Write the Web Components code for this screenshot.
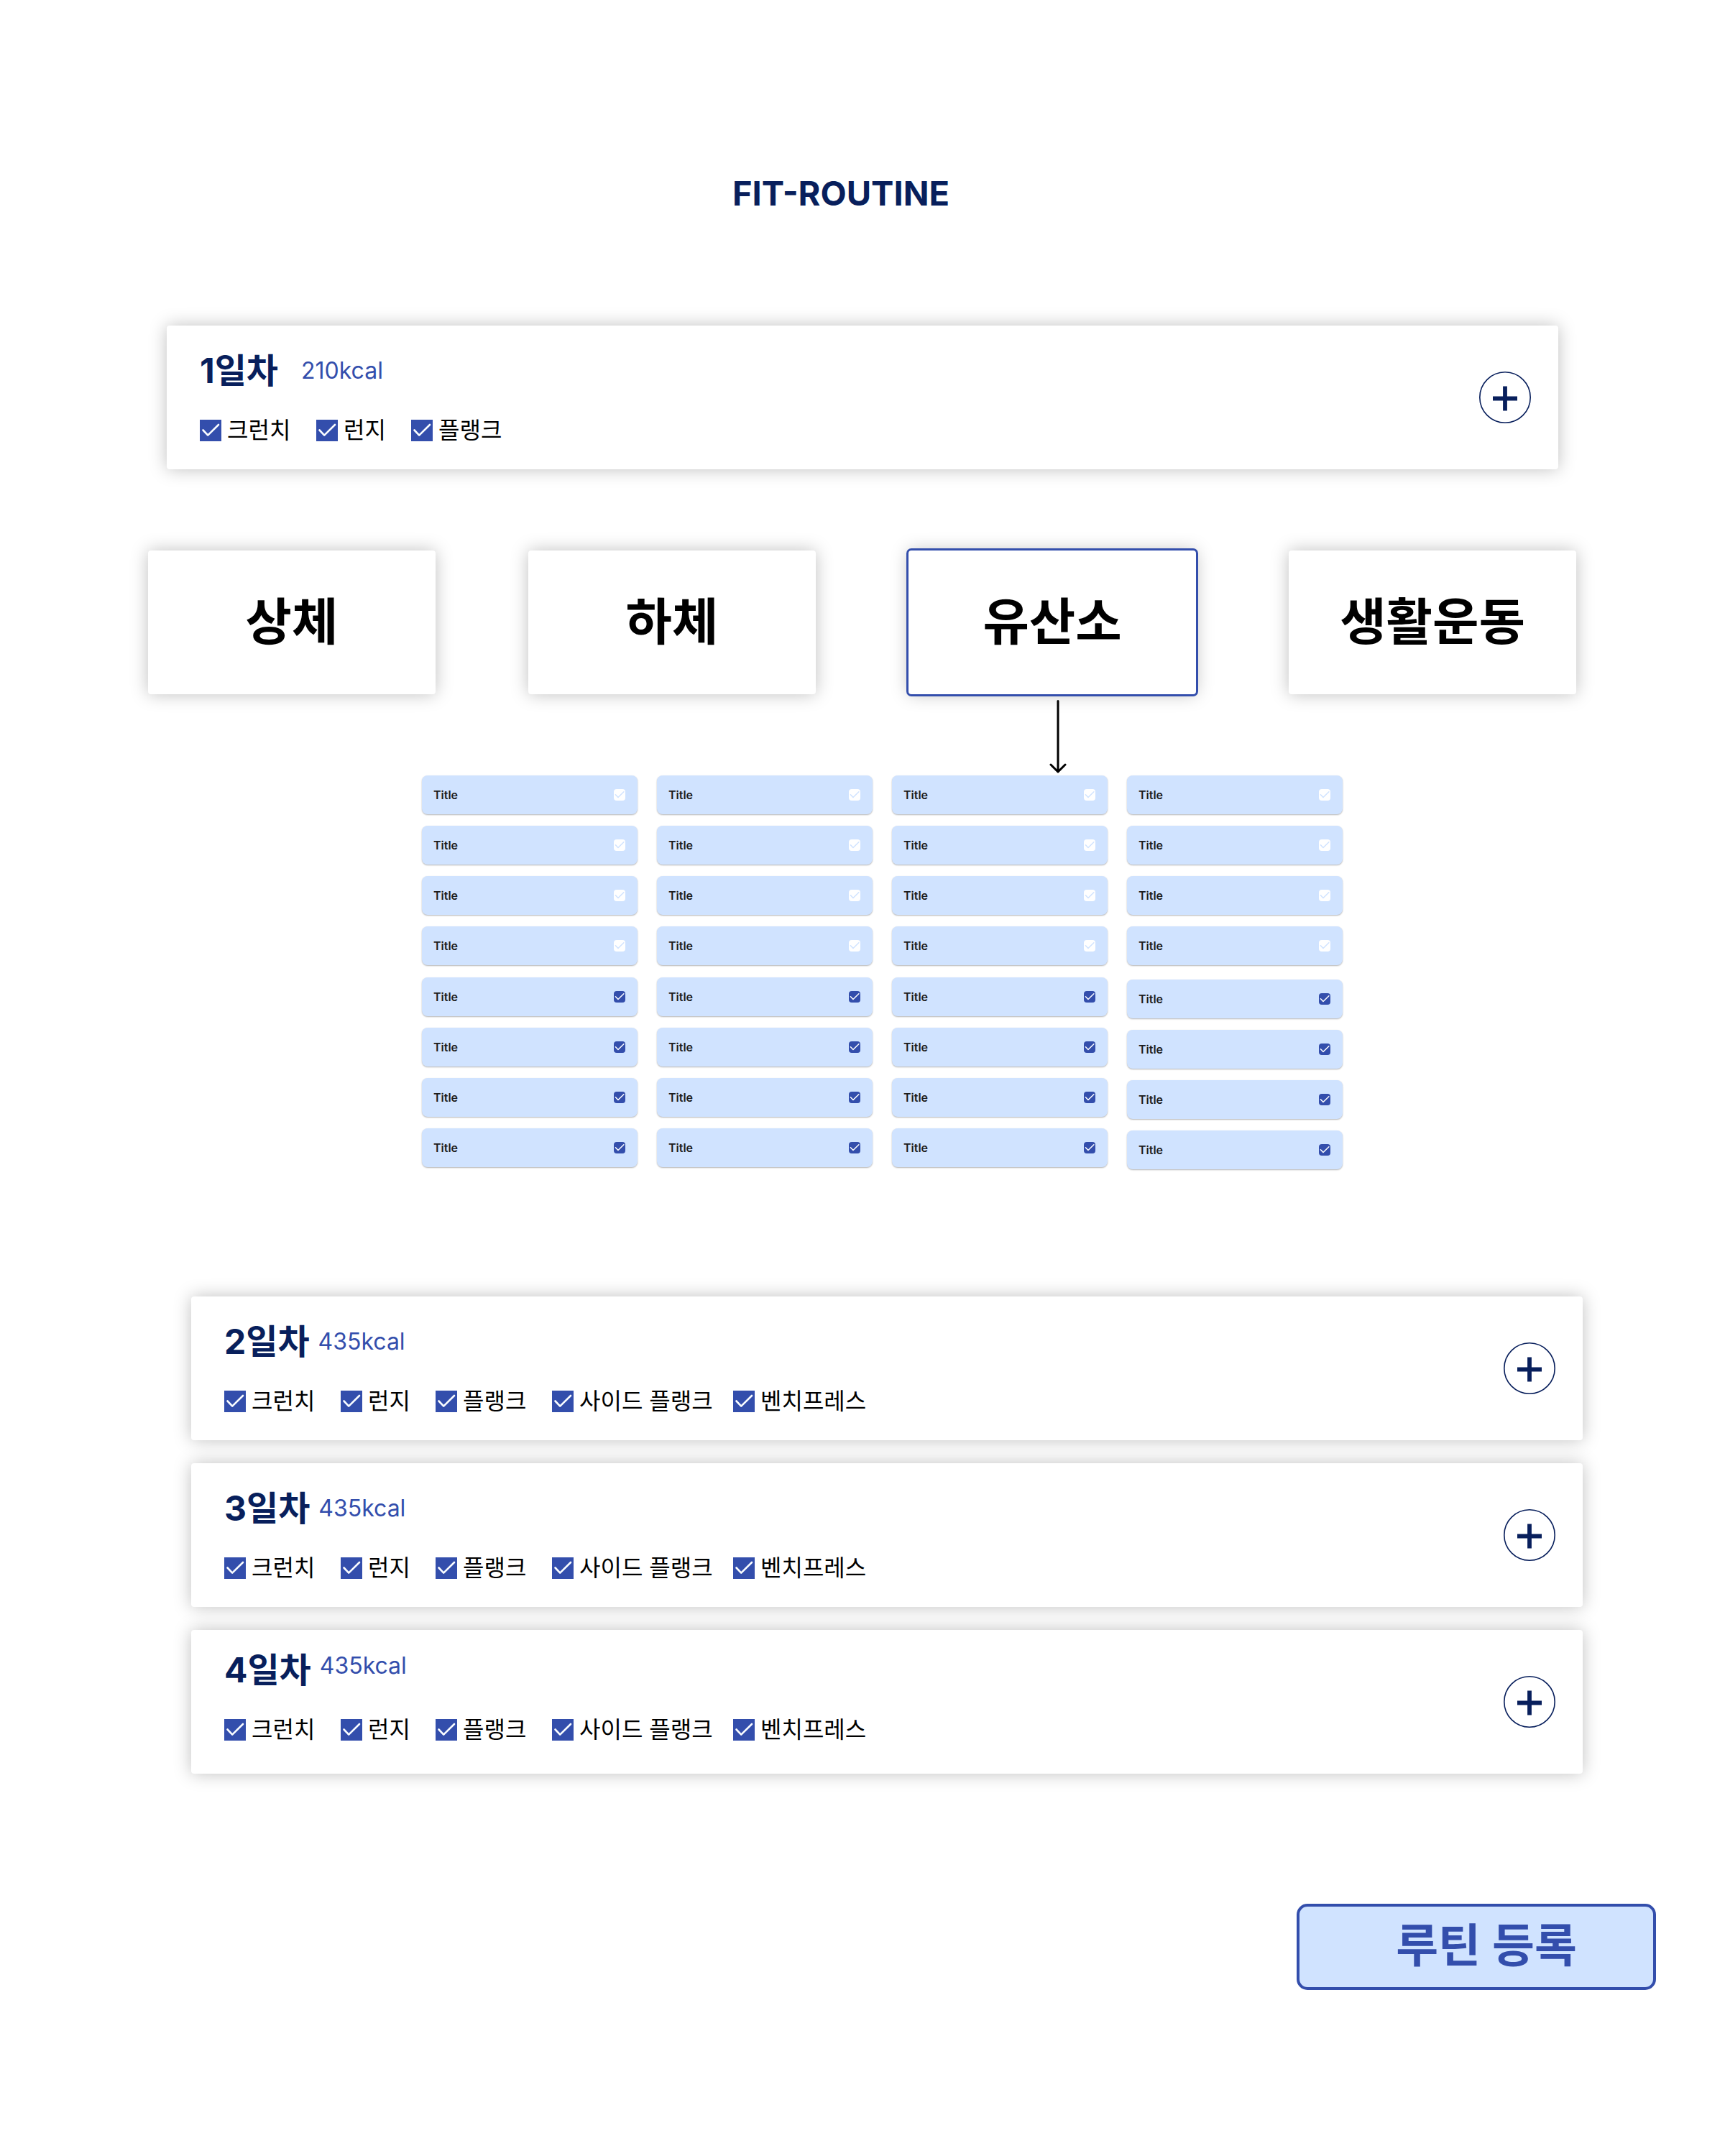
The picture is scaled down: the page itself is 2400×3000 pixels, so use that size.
<!DOCTYPE html>
<html lang="ko">
<head>
<meta charset="utf-8">
<title>FIT-ROUTINE</title>
<style>
  :root {
    --navy: #081f5c;
    --blue: #334eac;
    --sky: #d0e3ff;
    --card-shadow: 0 0 24px rgba(0, 0, 0, .25);
  }
  body {
    margin: 0;
    background: #fff;
    color: #000;
    font-family: Inter, "Noto Sans CJK KR", sans-serif;
  }
</style>
</head>
<body>
<fit-page></fit-page>

<script>
const define = (name, html, setup) => {
  const template = document.createElement('template');
  template.innerHTML = html;
  customElements.define(name, class extends HTMLElement {
    constructor() {
      super();
      this.attachShadow({ mode: 'open' }).append(template.content.cloneNode(true));
    }
    connectedCallback() {
      if (setup) setup(this, this.shadowRoot);
    }
  });
};

/* Tick box with its label; the "tile" variant is the light blue row. */
define('check-item', `
  <style>
    :host { display: block; }
    label { display: flex; align-items: center; gap: 8px; font-size: 32px; line-height: 46px; white-space: nowrap; cursor: pointer; }
    .box { display: grid; width: 30px; height: 30px; flex: none; }
    .box > * { grid-area: 1 / 1; width: 100%; height: 100%; }
    input { appearance: none; margin: 0; background: var(--blue); cursor: pointer; }
    svg { display: block; pointer-events: none; fill: none; stroke: #f9fcff; stroke-width: 2.6; stroke-linecap: round; stroke-linejoin: round; }
    :host([tile]) label {
      flex-direction: row-reverse; justify-content: space-between;
      height: 54px; box-sizing: border-box; padding: 0 17px 0 16px;
      border-radius: 8px; background: var(--sky); box-shadow: 0 1px 2px rgba(0, 0, 0, .3);
      color: #1c1c1c; font-size: 16px; line-height: 24px; font-weight: 600;
    }
    :host([tile]) .box { width: 16px; height: 16px; }
    :host([tile]) input { border-radius: 4px; background: #fff; }
    :host([tile]) svg { stroke: var(--sky); stroke-width: 2.8; }
    :host([tile]) input:checked { background: var(--blue); }
    :host([tile]) input:checked + svg { stroke: #fff; }
  </style>
  <label>
    <span class="box">
      <input type="checkbox">
      <svg viewBox="0 0 30 30" aria-hidden="true"><path d="M4.5 14.5 11.2 21.6 26 7"/></svg>
    </span>
    <span><slot></slot></span>
  </label>
`, (host, root) => {
  root.querySelector('input').checked = host.hasAttribute('checked');
});

/* Card of one day: heading, calories, exercises and an add button. */
define('day-card', `
  <style>
    :host { display: block; }
    article {
      display: flex; align-items: center; justify-content: space-between;
      min-height: 200px; box-sizing: border-box; padding: 0 38px 0 46px;
      border-radius: 4px; background: #fff; box-shadow: var(--card-shadow);
    }
    .body { display: grid; gap: 31px; padding: 34px 0 31px; }
    header { display: flex; align-items: center; gap: var(--kcal-gap, 12px); }
    h2 { margin: 0; font-size: 48px; line-height: 58px; font-weight: 700; color: var(--navy); }
    p { margin: 0; font-size: 32px; line-height: 46px; font-weight: 400; color: var(--blue); }
    .list { display: grid; grid-template-columns: 162px 132px 162px 252px auto; }
    button { width: 72px; height: 72px; padding: 0; border: 0; background: none; cursor: pointer; }
    svg { display: block; width: 72px; height: 72px; fill: none; stroke: var(--navy); }
    :host([raised]) .body { padding: 27px 0 38px; }
    :host([raised]) header { align-items: flex-start; }
  </style>
  <article>
    <div class="body">
      <header><h2></h2><p></p></header>
      <div class="list"><slot></slot></div>
    </div>
    <button type="button" aria-label="운동 추가">
      <svg viewBox="0 0 72 72" aria-hidden="true">
        <circle cx="36" cy="36" r="35.2" stroke-width="1.6"/>
        <path d="M36 20.5v34M19 37.5h34" stroke-width="5.8"/>
      </svg>
    </button>
  </article>
`, (host, root) => {
  root.querySelector('h2').textContent = host.getAttribute('day');
  root.querySelector('p').textContent = host.getAttribute('kcal');
});

define('category-card', `
  <style>
    :host { display: block; }
    button {
      display: block; width: 100%; height: 200px; padding: 0; border: 0; border-radius: 4px;
      background: #fff; box-shadow: var(--card-shadow); color: #000;
      font: inherit; font-size: 70px; line-height: 84px; font-weight: 700; cursor: pointer;
    }
    :host([selected]) button { outline: 3px solid var(--blue); }
  </style>
  <button type="button"><slot></slot></button>
`, (host, root) => {
  root.querySelector('button').setAttribute('aria-pressed', host.hasAttribute('selected'));
});

define('category-picker', `
  <style>
    :host { display: grid; grid-template-columns: repeat(4, 1fr); column-gap: 129px; row-gap: 8px; }
    .arrow { grid-column: 3; justify-self: center; padding-left: 16px; }
    svg { display: block; width: 26px; height: 102px; fill: none; stroke: #000; stroke-width: 3; stroke-linecap: round; stroke-linejoin: round; }
  </style>
  <slot></slot>
  <div class="arrow">
    <svg viewBox="0 0 26 102" aria-hidden="true"><path d="M13 1.5V100M3 90l10 10 10-10"/></svg>
  </div>
`);

/* One column of exercises: four open, then four ticked. */
define('exercise-column', `
  <style>
    :host { display: flex; flex-direction: column; gap: 17px; }
    :host([spaced]) { gap: 20px; }
    .group { display: grid; gap: 16px; }
  </style>
  <div class="group"></div>
  <div class="group"></div>
`, (host, root) => {
  root.querySelectorAll('.group').forEach((group, index) => {
    group.innerHTML = `<check-item tile${index ? ' checked' : ''}>Title</check-item>`.repeat(4);
  });
});

define('fit-page', `
  <style>
    :host { display: block; padding: 240px 0 231px; }
    h1 { margin: 0 60px 155px 0; text-align: center; font-size: 47px; line-height: 58px; font-weight: 700; color: var(--navy); }
    .today { margin: 0 232px 113px; --kcal-gap: 32px; }
    category-picker { margin: 0 207px 3px 206px; }
    .exercises { display: grid; grid-template-columns: repeat(4, 1fr); align-items: start; gap: 27px; margin: 0 532px 177px 587px; }
    .days { display: grid; gap: 32px; margin: 0 198px 181px 266px; }
    footer { display: flex; justify-content: flex-end; padding-right: 96px; }
    .submit {
      width: 500px; height: 120px; box-sizing: border-box; padding: 0 0 4px 28px;
      border: 4px solid var(--blue); border-radius: 15px; background: var(--sky); color: var(--blue);
      font: inherit; font-size: 64px; line-height: 76px; font-weight: 600; cursor: pointer;
    }
  </style>
  <h1>FIT-ROUTINE</h1>
  <day-card class="today" day="1일차" kcal="210kcal">
    <check-item checked>크런치</check-item>
    <check-item checked>런지</check-item>
    <check-item checked>플랭크</check-item>
  </day-card>
  <category-picker>
    <category-card>상체</category-card>
    <category-card>하체</category-card>
    <category-card selected>유산소</category-card>
    <category-card>생활운동</category-card>
  </category-picker>
  <section class="exercises">
    <exercise-column></exercise-column>
    <exercise-column></exercise-column>
    <exercise-column></exercise-column>
    <exercise-column spaced></exercise-column>
  </section>
  <section class="days">
    <day-card day="2일차" kcal="435kcal">
      <check-item checked>크런치</check-item>
      <check-item checked>런지</check-item>
      <check-item checked>플랭크</check-item>
      <check-item checked>사이드 플랭크</check-item>
      <check-item checked>벤치프레스</check-item>
    </day-card>
    <day-card day="3일차" kcal="435kcal">
      <check-item checked>크런치</check-item>
      <check-item checked>런지</check-item>
      <check-item checked>플랭크</check-item>
      <check-item checked>사이드 플랭크</check-item>
      <check-item checked>벤치프레스</check-item>
    </day-card>
    <day-card raised day="4일차" kcal="435kcal">
      <check-item checked>크런치</check-item>
      <check-item checked>런지</check-item>
      <check-item checked>플랭크</check-item>
      <check-item checked>사이드 플랭크</check-item>
      <check-item checked>벤치프레스</check-item>
    </day-card>
  </section>
  <footer><button class="submit" type="submit">루틴 등록</button></footer>
`);
</script>
</body>
</html>
